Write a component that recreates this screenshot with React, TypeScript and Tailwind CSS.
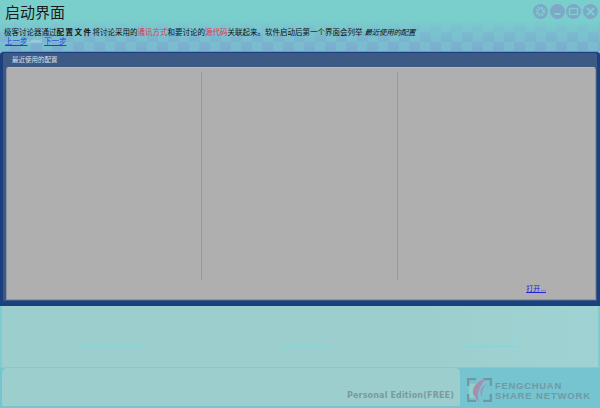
const cjk = "font-['Liberation_Sans','Noto_Sans_CJK_SC',sans-serif]";

function WinButton({ children }: { children: React.ReactNode }) {
  return (
    <div className="w-[15px] h-[15px] rounded-full bg-[#7ea8c6] flex items-center justify-center">
      <svg width="11" height="11" viewBox="0 0 11 11">{children}</svg>
    </div>
  );
}

function Logo() {
  return (
    <svg width="25" height="24" viewBox="0 0 25 24" className="shrink-0">
      <rect x="2" y="6" width="8" height="14" fill="#8fd0cd" />
      <path d="M1 8V1h8M16 1h8v7M24 16v7h-8M9 23H1v-7" fill="none" stroke="#6f98a3" strokeWidth="2.6" />
      <path d="M18 0C12 3 7 7 6 12c-1 4 2 8 6 12-1-4-2-8 0-12 1-4 5-8 6-12z" fill="#a68fb0" />
      <path d="M20 6c-3 2-5 6-5 9 0 2 0 3 1 5-3-3-3-6-2-9 1-2 3-4 6-5z" fill="#b58ba8" />
    </svg>
  );
}

export default function App() {
  return (
    <div className={`w-[600px] h-[408px] overflow-hidden flex flex-col bg-[#7ccdd0] ${cjk}`}>
      {/* Header */}
      <header className="h-[51px] shrink-0 relative bg-[linear-gradient(to_bottom,#7acfcd_0%,#7acfcd_38%,rgba(122,207,205,0.35)_70%,rgba(122,207,205,0.05)_100%),repeating-conic-gradient(#7aabcf_0_25%,#7ab9cf_0_50%)] bg-[size:100%_100%,21px_21px] pl-[5px] pt-[3px]">
        <h1 className="text-[15px] leading-[20px] text-[#1a1a1a] font-normal">启动界面</h1>
        <p className="mt-[5px] text-[7.5px] leading-[10px] text-[#111] whitespace-nowrap -ml-[1px]">
          极客讨论器通过<b className="tracking-[1.5px]">配置文件</b>将讨论采用的<span className="text-[#e8304a]">通讯方式</span>和要讨论的<span className="text-[#e8304a]">源代码</span>关联起来。软件启动后第一个界面会列举 <i className="tracking-[-0.25px]">最近使用的配置</i>
        </p>
        <div className="-mt-[1px] flex text-[7.5px] leading-[9px] whitespace-nowrap">
          <a className="text-[#1f3fe0] underline w-[22px]">上一步</a>
          <span className="w-[17px] text-[#b5dbe4] text-[6px]">Label</span>
          <a className="text-[#1f3fe0] underline">下一步</a>
        </div>
        <div className="absolute right-[2px] top-[3.5px] flex gap-[1.7px]">
          <WinButton>
            <circle cx="5.5" cy="5.5" r="3" fill="none" stroke="#7ccfcf" strokeWidth="2" strokeDasharray="1.6 0.8" />
            <circle cx="5.5" cy="5.5" r="4.2" fill="none" stroke="#7ccfcf" strokeWidth="1.4" strokeDasharray="1.6 1.7" />
          </WinButton>
          <WinButton>
            <rect x="2.5" y="7" width="6" height="2" fill="#7ccfcf" />
          </WinButton>
          <WinButton>
            <rect x="1.5" y="2.5" width="8" height="6" fill="none" stroke="#7ccfcf" strokeWidth="1.4" />
          </WinButton>
          <WinButton>
            <path d="M2 2l7 7M9 2l-7 7" stroke="#7ccfcf" strokeWidth="2.2" />
          </WinButton>
        </div>
      </header>

      {/* Recent configs */}
      <section className="h-[255px] shrink-0 flex flex-col bg-[#3d5a85] border-t border-[#7f93b0] rounded-tl-[4px] rounded-tr-[4px] shadow-[inset_0_1px_0_#1c3f80,inset_3px_0_0_#1c3f80,inset_-3px_0_0_#1c3f80,inset_0_-5px_0_#1c3f80]">
        <div className="h-[15px] shrink-0 pl-[12px] pt-[3px] text-[6.5px] leading-[10px] text-[#dbe3ee]">最近使用的配置</div>
        <div className="h-[233px] ml-[6px] mr-[4px] rounded-t-[3px] bg-[#afafaf] border border-[#8d97a8] border-t-[#b9bcc0] flex flex-col">
          <div className="mt-[4px] h-[208px] flex">
            <div className="w-[195px] border-r border-[#9a9a9a]" />
            <div className="w-[196px] border-r border-[#9a9a9a]" />
          </div>
          <div className="mt-[4px] pr-[49px] flex justify-end text-[7px] leading-[10px]">
            <a className="text-[#2222dd] underline">打开...</a>
          </div>
        </div>
      </section>

      {/* Lower band */}
      <section className="h-[61px] shrink-0 ml-[2px] mr-[2px] bg-[linear-gradient(to_right,#9ccecd_0%,#9ccecd_70%,#9fd3d3_100%)] relative">
        <div className="absolute top-[40px] left-0 right-0 flex">
          <div className="ml-[80px] w-[61px] h-px bg-[#86d4d7]" />
          <div className="ml-[136px] w-[53px] h-px bg-[#86d4d7]" />
          <div className="ml-[134px] w-[52px] h-px bg-[#86d4d7]" />
        </div>
      </section>

      {/* Footer */}
      <footer className="flex-1 flex border-t border-[#7fcdd0] pb-[2px] bg-[#76c4cf]">
        <div className="w-[458px] ml-[2px] rounded-t-[5px] bg-[#9ccecd] flex items-end justify-end pr-[6px] pb-[4px]">
          <span className="text-[8px] leading-[12px] font-bold tracking-[0.15px] text-[#7d9a9c] font-['DejaVu_Sans',sans-serif]">Personal Edition(FREE)</span>
        </div>
        <div className="flex-1 flex items-start pl-[7px] pt-[10px] gap-[3px]">
          <Logo />
          <div className="pt-[3px] text-[#6e9aa6] font-bold text-[9.5px] leading-[9.5px] whitespace-nowrap">
            <div className="tracking-[0.7px]">FENGCHUAN</div>
            <div className="tracking-[0.85px]">SHARE NETWORK</div>
          </div>
        </div>
      </footer>
    </div>
  );
}
